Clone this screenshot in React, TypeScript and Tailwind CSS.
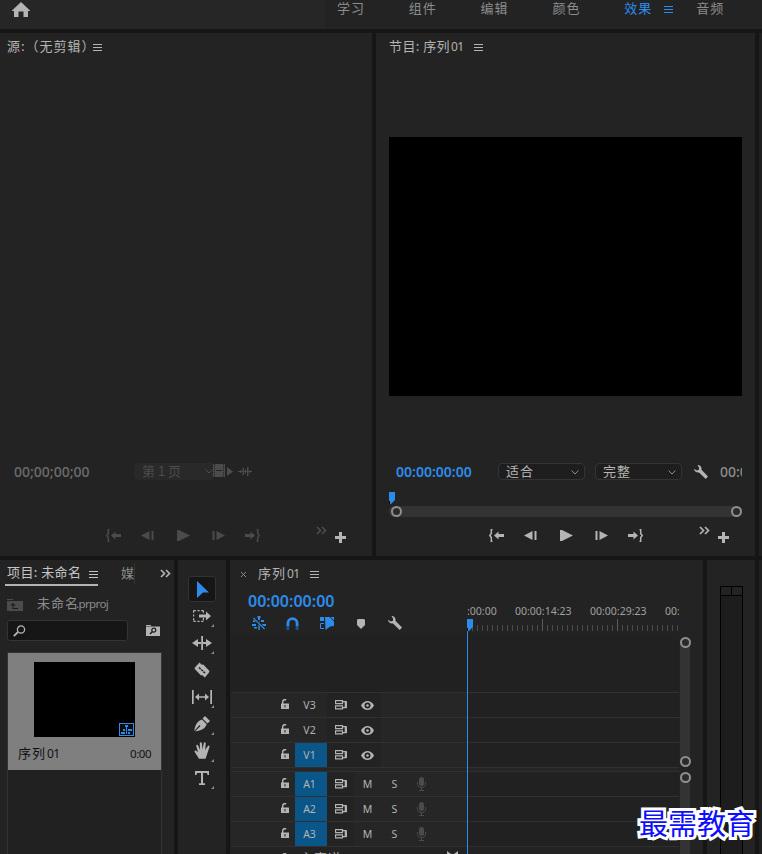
import type { ReactNode } from "react";

type IconProps = { className?: string };

type GlyphProps = IconProps & {
  w: number;
  h: number;
  children: ReactNode;
};

const Glyph = ({ w, h, className = "", children }: GlyphProps) => (
  <svg
    width={w}
    height={h}
    viewBox={`0 0 ${w} ${h}`}
    fill="currentColor"
    className={`block shrink-0 ${className}`}
  >
    {children}
  </svg>
);

const HomeIcon = ({ className }: IconProps) => (
  <Glyph w={18} h={15} className={className}>
    <path d="M9 0 18 8.4V9h-2v6h-4.500V9.500h-5V15H2V9H0v-.6z" />
  </Glyph>
);

const MenuIcon = ({ className }: IconProps) => (
  <Glyph w={9} h={7} className={className}>
    <path d="M0 0h9v1H0zM0 3h9v1H0zM0 6h9v1H0z" />
  </Glyph>
);

const ChevronIcon = ({ className }: IconProps) => (
  <Glyph w={8} h={5} className={className}>
    <path d="M.5.5 4 4 7.500.5" fill="none" stroke="currentColor" />
  </Glyph>
);

const MoreIcon = ({ className }: IconProps) => (
  <Glyph w={11} h={9} className={className}>
    <path
      d="m1 1 3.500 3.500L1 8M6 1l3.500 3.500L6 8"
      fill="none"
      stroke="currentColor"
      strokeWidth="1.700"
    />
  </Glyph>
);

const PlusIcon = ({ className }: IconProps) => (
  <Glyph w={11} h={11} className={className}>
    <path d="M4 0h3v4h4v3H7v4H4V7H0V4h4z" />
  </Glyph>
);

const GoInIcon = ({ className }: IconProps) => (
  <Glyph w={15} h={13} className={className}>
    <path d="M3.500.5H2.300v4L.8 6.500l1.500 2v4h1.200" fill="none" stroke="currentColor" strokeWidth="1.500" />
    <path d="M5 6.500 9.500 2.500V5H15v3H9.500v2.500z" />
  </Glyph>
);

const GoOutIcon = ({ className }: IconProps) => (
  <Glyph w={15} h={13} className={className}>
    <path d="M11.500.5h1.200v4l1.500 2-1.500 2v4h-1.200" fill="none" stroke="currentColor" strokeWidth="1.500" />
    <path d="M10 6.500 5.500 2.500V5H0v3h5.500v2.500z" />
  </Glyph>
);

const StepBackIcon = ({ className }: IconProps) => (
  <Glyph w={13} h={9} className={className}>
    <path d="M0 4.500 8.500 0v9zM10.500 0h2v9h-2z" />
  </Glyph>
);

const StepForwardIcon = ({ className }: IconProps) => (
  <Glyph w={13} h={9} className={className}>
    <path d="M13 4.500 4.500 0v9zM.5 0h2v9h-2z" />
  </Glyph>
);

const PlayIcon = ({ className }: IconProps) => (
  <Glyph w={13} h={11} className={className}>
    <path d="M0 0h2l11 5.500L2 11H0z" />
  </Glyph>
);

const WrenchIcon = ({ className }: IconProps) => (
  <Glyph w={14} h={14} className={className}>
    <path d="M3.500 0C6 0 8 2 7.500 4.800L14 11.500 11.700 14 5 7.500C2.800 8 0 6.500 0 3.800L2.700 5.500 5 4.800V2.500z" />
  </Glyph>
);

const PlayheadIcon = ({ className }: IconProps) => (
  <Glyph w={6} h={12} className={className}>
    <path d="M0 0h6v8l-4 4H0z" />
    <path d="M0 9h1v3H0z" fill="#000" />
  </Glyph>
);

const Knob = () => (
  <span className="block size-[11px] shrink-0 rounded-full border-2 border-[#8f8f8f] bg-[#2b2b2b]" />
);

const FilmIcon = ({ className }: IconProps) => (
  <Glyph w={12} h={13} className={className}>
    <path d="M0 0h12v13H0z" />
    <path d="M1.500 0v13M10.500 0v13" stroke="#232323" strokeDasharray="1 1" fill="none" />
    <path d="M3 6h6v1H3z" fill="#232323" />
  </Glyph>
);

const WaveIcon = ({ className }: IconProps) => (
  <Glyph w={14} h={9} className={className}>
    <path d="M0 4h14v1H0zM2 3h1v3H2zM4.500 1H6v7H4.500zM7 2.500h1v4H7zM9 0h1.500v9H9zM11.500 3h1v3h-1z" />
  </Glyph>
);

const FolderUpIcon = ({ className }: IconProps) => (
  <Glyph w={16} h={12} className={className}>
    <path d="M0 0h6v1H0zM0 2h16v10H0z" />
    <path d="M6 4 3.300 6.500H5.500V10H11V9H6.500V6.500h2.200z" fill="#1b1b1b" />
  </Glyph>
);

const SearchIcon = ({ className }: IconProps) => (
  <Glyph w={13} h={12} className={className}>
    <path d="M5 7 .8 11.200" stroke="currentColor" strokeWidth="1.800" />
    <circle cx="8" cy="4.500" r="3.600" fill="none" stroke="currentColor" strokeWidth="1.300" />
  </Glyph>
);

const FolderSearchIcon = ({ className }: IconProps) => (
  <Glyph w={14} h={11} className={className}>
    <path d="M0 0h5v1H0zM0 1.500h14V11H0z" />
    <path d="M6.300 6.700 4 9" stroke="#1b1b1b" strokeWidth="1.400" />
    <circle cx="7.800" cy="5.200" r="2" fill="none" stroke="#1b1b1b" strokeWidth="1.200" />
  </Glyph>
);

const SequenceBadge = ({ className }: IconProps) => (
  <Glyph w={15} h={13} className={className}>
    <path d="M0 0h15v13H0z" />
    <path d="M1 1h13v11H1z" fill="#0d0d0d" />
    <path d="M6 2h3v2H8v7H7V4H6zM4 6h2v2H4zM9 6h4v2H9zM2 9h4v2H2zM9 9h2v2H9z" />
  </Glyph>
);

/* tools */

const SelectIcon = () => (
  <Glyph w={12} h={17} className="ml-px text-[#2d8ceb]">
    <path d="M0 0 12 11.500 6 11.500 0 17z" />
  </Glyph>
);

const TrackSelectIcon = () => (
  <Glyph w={18} h={12}>
    <path
      d="M.6.600h9.800M.6 11.400h9.800M.6.600v10.800M10.400.600v3M10.400 8v3.400"
      fill="none"
      stroke="currentColor"
      strokeWidth="1.200"
      strokeDasharray="2.200 1.600"
    />
    <path d="M6 4.500h7v-3L18 6l-5 4.500V7.500H6z" />
  </Glyph>
);

const RippleIcon = () => (
  <Glyph w={20} h={14}>
    <path d="M9.200 0h1.800v14H9.200zM0 7l6-4v3h3v2H6v3zM20 7l-6-4v3h-3v2h3v3z" />
  </Glyph>
);

const RazorIcon = () => (
  <Glyph w={16} h={16}>
    <path d="M5.500.5 8 3l1-.8L15.500 9 14.700 11 10.800 15.500 8 13l-1 .5L.5 6.800 1.300 5z" />
    <path d="m5 5.500 6 5.500" stroke="#232323" strokeWidth="1.600" strokeDasharray="2.200 .8" />
  </Glyph>
);

const SlipIcon = () => (
  <Glyph w={20} h={14}>
    <path d="M0 0h1.700v14H0zM18.300 0H20v14h-1.700z" />
    <path d="M3 7l4-3.500v2.800h6V3.500L17 7l-4 3.500V7.700H7v2.800z" />
  </Glyph>
);

const PenIcon = () => (
  <Glyph w={16} h={16}>
    <path d="M11 0 16 5l-2.500 2.500L8.600 2.500z" />
    <path d="M8 3.500l4.700 4.700C11.500 12 8 14.500 1 15.500L6.500 10 5.500 9 .3 15C1 9 3.500 5 8 3.500z" />
  </Glyph>
);

const HandIcon = () => (
  <Glyph w={16} h={17}>
    <path d="M5 16.800 1 10.500C-.2 9 1 8 2.200 8.800L4 10.300 2.300 4.300C2 2.700 3.700 2.300 4.200 3.800L6 7.800 5.800 1.500c0-1.700 1.900-1.700 2.100 0L8.600 7.500 9.700 1.300c.3-1.600 2.100-1.200 2 .4L11.200 8 13.700 4.200c.8-1.400 2.400-.5 1.700 1L13 12.500 11.500 16.800z" />
  </Glyph>
);

const TypeIcon = () => (
  <Glyph w={14} h={14}>
    <path d="M0 0h14v4h-1.500L12 2H8v10.300h2V14H4v-1.700h2V2H2l-.5 2H0z" />
  </Glyph>
);

/* timeline */

const NestIcon = ({ className }: IconProps) => (
  <Glyph w={14} h={14} className={className}>
    <path d="M5.500 0h3v2H8v2H6V2h-.5zM1 4h4v2H1zM9 4h3v2H9zM0 8h4v2H0zM10 8h4v2h-4zM6.300 5h1.500v9H6.300zM2 11h3v1.500H2z" />
    <path d="m2 2 10.500 11" stroke="#232323" strokeWidth="2.600" />
    <path d="m1.500 2 11 11" stroke="currentColor" strokeWidth="1.200" />
  </Glyph>
);

const MagnetIcon = ({ className }: IconProps) => (
  <Glyph w={13} h={13} className={className}>
    <path d="M1.900 9.500V6.200a4.600 4.600 0 0 1 9.200 0v3.300" fill="none" stroke="currentColor" strokeWidth="2.800" />
    <path d="M.5 9.500h2.800V13H.5zM9.700 9.500h2.800V13H9.700z" fill="#17568f" />
  </Glyph>
);

const LinkedIcon = ({ className }: IconProps) => (
  <Glyph w={14} h={13} className={className}>
    <path d="M0 0h4v4H0zM5 0h4.500l4.500 4.500V9l-4 .5L5.500 13zM10.500 0H14v3.500z" />
    <path d="M4 6.500H.5v5H4" fill="none" stroke="currentColor" />
  </Glyph>
);

const MarkerIcon = ({ className }: IconProps) => (
  <Glyph w={8} h={10} className={className}>
    <path d="M1 0h6l1 1v5L4 10 0 6V1z" />
  </Glyph>
);

const LockIcon = ({ className }: IconProps) => (
  <Glyph w={8} h={11} className={className}>
    <path d="M0 4.500h8V10H0z" />
    <path d="M1.700 5V2.800C1.700.7 3 .6 5.300.6" fill="none" stroke="currentColor" strokeWidth="1.400" />
    <path d="M3.500 6h1v2.500h-1z" fill="#232323" />
  </Glyph>
);

const SyncIcon = ({ className }: IconProps) => (
  <Glyph w={12} h={10} className={className}>
    <path d="M.5.700h7v3h-7zM.5 5.800h7v3h-7zM7.500 1.700h3.500v6H7.500" fill="none" stroke="currentColor" strokeWidth="1.200" />
    <path d="M9.700 1.500H12v6.500H9.700z" />
  </Glyph>
);

const EyeIcon = ({ className }: IconProps) => (
  <Glyph w={13} h={9} className={className}>
    <path d="M0 4.500C3-1.500 10-1.500 13 4.500 10 10.500 3 10.500 0 4.500z" />
    <circle cx="6.500" cy="4.500" r="3" fill="#232323" />
    <circle cx="6.500" cy="4.500" r="1.300" />
  </Glyph>
);

const MicIcon = ({ className }: IconProps) => (
  <Glyph w={9} h={14} className={className}>
    <rect x="2" y="0" width="5" height="9" rx="2.500" />
    <path d="M.5 5v2.500C.5 11.500 8.500 11.500 8.500 7.500V5M4.500 10.500V13M2 13.500h5" fill="none" stroke="currentColor" />
  </Glyph>
);

const workspaces = ["学习", "组件", "编辑", "颜色", "效果", "音频"];

const TopBar = () => (
  <header className="flex h-[29px] shrink-0 bg-[#232323] text-[13px] leading-[15px] tracking-[1px] text-[#8c8c8c]">
    <div className="w-[325px] shrink-0 bg-[#262626] pl-3 pt-[2px]">
      <HomeIcon className="text-[#b4b4b4]" />
    </div>
    <nav className="flex pl-3">
      {workspaces.map((name) => (
        <div
          key={name}
          className={
            name === "效果"
              ? "flex w-[72px] shrink-0 text-[#2d8ceb]"
              : "w-[71.800px] shrink-0"
          }
        >
          {name}
          {name === "效果" && <MenuIcon className="ml-3 mt-[6px]" />}
        </div>
      ))}
    </nav>
  </header>
);

const Transport = () => (
  <div className="flex items-center">
    <GoInIcon />
    <StepBackIcon className="ml-5" />
    <PlayIcon className="ml-[23px]" />
    <StepForwardIcon className="ml-[22px]" />
    <GoOutIcon className="ml-5" />
  </div>
);

const SourcePanel = () => (
  <section className="flex w-[372px] flex-col bg-[#232323]">
    <div className="flex h-7 items-center pl-[7px] text-[13px] tracking-[1px] text-[#b4b4b4]">
      <span className="-mt-[2px] w-[86px] whitespace-nowrap">源:（无剪辑）</span>
      <MenuIcon className="mt-px" />
    </div>
    <div className="mt-[402px] flex h-[17px] items-center pl-[14px] text-[#4b4b4b]">
      <span className="w-[120px] font-[Noto_Sans] text-[14px] font-medium text-[#6c6c6c]">
        00;00;00;00
      </span>
      <div className="flex h-[17px] w-[79px] items-center rounded-l-sm bg-[#292929] pl-2 text-[13px]">
        <span className="-mt-[2px] w-[66px] whitespace-nowrap">第 1 页</span>
        <ChevronIcon />
      </div>
      <FilmIcon className="-mt-[2px]" />
      <Glyph w={6} h={9} className="ml-[2px]">
        <path d="M0 0 6 4.500 0 9z" />
      </Glyph>
      <WaveIcon className="ml-[5px]" />
    </div>
    <div className="mt-[49px] flex h-[13px] items-center pl-[106px] text-[#4b4b4b]">
      <Transport />
      <MoreIcon className="-mt-[11px] ml-14" />
      <PlusIcon className="ml-2 mt-1 text-[#b4b4b4]" />
    </div>
  </section>
);

const Select = ({ label }: { label: string }) => (
  <div className="flex h-[17px] w-[87px] shrink-0 items-center justify-between rounded-sm border border-[#343434] bg-[#1e1e1e] pl-[7px] pr-[5px] text-[13px] leading-[15px] tracking-[1px] text-[#b4b4b4]">
    <span className="-mt-[2px]">{label}</span>
    <ChevronIcon className="mt-px text-[#8c8c8c]" />
  </div>
);

const ProgramPanel = () => (
  <section className="flex w-[379px] flex-col bg-[#232323] px-[13px] text-[#b4b4b4]">
    <div className="flex h-7 items-center text-[13px] tracking-[1px]">
      <span className="-mt-[2px] w-[62px] whitespace-nowrap tracking-[0.400px]">节目: 序列</span>
      <span className="w-[23px] font-[Noto_Sans] text-[12px] tracking-[-0.700px]">01</span>
      <MenuIcon className="mt-px" />
    </div>
    <div className="mt-[76px] h-[259px] w-[353px] bg-black" />
    <div className="mt-[67px] flex h-[17px] w-[353px] items-center overflow-hidden pl-[7px]">
      <span className="w-[102px] shrink-0 font-[Noto_Sans] text-[14px] font-semibold leading-[17px] text-[#2d8ceb]">
        00:00:00:00
      </span>
      <Select label="适合" />
      <div className="w-[10px] shrink-0" />
      <Select label="完整" />
      <WrenchIcon className="ml-3" />
      <span className="ml-3 font-[Noto_Sans] text-[14px] font-medium leading-[17px] text-[#8c8c8c]">
        00:0
      </span>
    </div>
    <PlayheadIcon className="mt-3 text-[#2d8ceb]" />
    <div className="mt-[2px] flex h-[11px] w-[353px] items-center justify-between rounded-full bg-[#333333] pl-[2px]">
      <Knob />
      <Knob />
    </div>
    <div className="mt-3 flex h-[13px] items-center pl-[100px]">
      <Transport />
      <MoreIcon className="-mt-[11px] ml-14" />
      <PlusIcon className="ml-2 mt-1" />
    </div>
  </section>
);

const ProjectPanel = () => (
  <section className="flex w-[174px] flex-col bg-[#232323] text-[13px] tracking-[1px]">
    <div className="flex h-[26px] pl-[5px]">
      <div className="flex w-[93px] items-center border-b-2 border-[#b4b4b4] pl-[2px] text-[#c4c4c4]">
        <span className="w-[82px] whitespace-nowrap tracking-[0.400px]">项目: 未命名</span>
        <MenuIcon className="mt-1" />
      </div>
      <div className="ml-[23px] mt-[3px] h-[21px] w-[14px] overflow-hidden border-r border-[#343434] text-[#8c8c8c]">
        媒
      </div>
      <MoreIcon className="ml-[25px] mt-[9px] text-[#b4b4b4]" />
    </div>
    <div className="mt-2 flex h-5 items-center pl-[7px] text-[#8c8c8c]">
      <FolderUpIcon className="mt-[2px] text-[#4b4b4b]" />
      <span className="-mt-[2px] ml-[14px]">未命名</span>
      <span className="-ml-[3px] font-[Noto_Sans] text-[11.500px] tracking-[-0.600px]">.prproj</span>
    </div>
    <div className="mt-[6px] flex h-[21px] items-center pl-[7px] text-[#b4b4b4]">
      <div className="flex h-[21px] w-[121px] items-center rounded-[3px] border border-[#343434] bg-[#161616] pl-[5px]">
        <SearchIcon />
      </div>
      <FolderSearchIcon className="-mt-px ml-[18px]" />
    </div>
    <div className="ml-[7px] mt-[11px] w-[155px] flex-1 border border-b-0 border-[#343434] bg-[#212121]">
      <div className="h-[117px] bg-[#7f7f7f] pt-[9px] text-[#111111]">
        <div className="ml-[26px] flex h-[75px] w-[101px] items-end justify-end bg-black pb-px pr-px text-[#2d8ceb]">
          <SequenceBadge />
        </div>
        <div className="flex h-[33px] items-center pl-[10px]">
          <span className="-mt-[2px] w-[29px]">序列</span>
          <span className="w-[83px] font-[Noto_Sans] text-[12px] tracking-[-0.700px]">01</span>
          <span className="font-[Noto_Sans] text-[11.500px] tracking-[-0.400px]">0:00</span>
        </div>
      </div>
    </div>
  </section>
);

const tools = [
  { name: "select", icon: <SelectIcon />, sub: false },
  { name: "track", icon: <TrackSelectIcon />, sub: true },
  { name: "ripple", icon: <RippleIcon />, sub: true },
  { name: "razor", icon: <RazorIcon />, sub: false },
  { name: "slip", icon: <SlipIcon />, sub: true },
  { name: "pen", icon: <PenIcon />, sub: true },
  { name: "hand", icon: <HandIcon />, sub: true },
  { name: "type", icon: <TypeIcon />, sub: true },
];

const ToolsPanel = () => (
  <section className="flex w-12 flex-col items-center bg-[#232323] pt-4 text-[#b4b4b4]">
    {tools.map(({ name, icon, sub }) => (
      <div
        key={name}
        className={
          name === "select"
            ? "relative flex h-[26px] w-7 items-center justify-center rounded-[3px] border border-[#333333] bg-[#161616]"
            : "relative flex h-[27px] w-7 items-center justify-center"
        }
      >
        {icon}
        {sub && (
          <Glyph w={3} h={3} className="absolute bottom-[2px] right-[2px] text-[#8c8c8c]">
            <path d="M3 0v3H0z" />
          </Glyph>
        )}
      </div>
    ))}
  </section>
);

const Ruler = () => (
  <div className="h-full w-[212px] overflow-hidden pt-[43px]">
    <div className="flex h-4 items-center whitespace-nowrap pt-px font-[Noto_Sans] text-[10.500px] text-[#a0a0a0]">
      <span className="w-12 shrink-0">:00:00</span>
      <span className="w-[75px] shrink-0">00:00:14:23</span>
      <span className="w-[75px] shrink-0">00:00:29:23</span>
      <span>00:</span>
    </div>
    <div className="flex h-3 items-end">
      <PlayheadIcon className="z-10 -mr-[6px] text-[#2d8ceb]" />
      {Array.from({ length: 43 }, (_, i) => (
        <span
          key={i}
          className={
            i > 0 && i % 15 === 0
              ? "mr-1 h-3 w-px shrink-0 bg-[#5a5a5a]"
              : "mr-1 h-[6px] w-px shrink-0 bg-[#4b4b4b]"
          }
        />
      ))}
    </div>
  </div>
);

const VideoTrack = ({ name }: { name: string }) => (
  <div className="flex h-[25px] shrink-0 border-t border-[#303030]">
    <div className="flex w-[236px] items-center bg-[#262626] pl-[50px] text-[#b4b4b4]">
      <LockIcon className="-mt-px" />
      <span
        className={
          name === "V1"
            ? "ml-[6px] flex h-6 w-8 items-center justify-center bg-[#0a5688] pr-[3px] pt-px font-[Noto_Sans] text-[10.500px]"
            : "ml-[6px] flex h-6 w-8 items-center justify-center pr-[3px] pt-px font-[Noto_Sans] text-[10.500px]"
        }
      >
        {name}
      </span>
      <div className="flex h-6 w-[54px] items-center bg-[#232323] pl-2">
        <SyncIcon className="-mt-px" />
        <EyeIcon className="ml-[14px] mt-px" />
      </div>
    </div>
    <div className="w-[212px] bg-[#212121]" />
  </div>
);

const AudioTrack = ({ name }: { name: string }) => (
  <div className="flex h-[25px] shrink-0 border-t border-[#303030]">
    <div className="flex w-[236px] items-center bg-[#262626] pl-[50px] font-[Noto_Sans] text-[10.500px] text-[#b4b4b4]">
      <LockIcon className="-mt-px" />
      <span className="ml-[6px] flex h-6 w-8 items-center justify-center bg-[#0a5688] pr-[3px] pt-px">
        {name}
      </span>
      <div className="flex h-6 w-[27px] items-center bg-[#232323] pl-2">
        <SyncIcon className="-mt-px" />
      </div>
      <span className="w-[27px] pt-px text-center">M</span>
      <span className="w-[27px] pt-px text-center">S</span>
      <MicIcon className="ml-[9px] text-[#4b4b4b]" />
    </div>
    <div className="w-[212px] bg-[#212121]" />
  </div>
);

const TimelinePanel = () => (
  <section className="relative flex w-[473px] flex-col overflow-hidden bg-[#232323] text-[#b4b4b4]">
    <div className="flex h-[73px]">
      <div className="w-[237px] shrink-0">
        <div className="flex h-7 items-center pl-[11px] text-[13px] tracking-[1px]">
          <Glyph w={5} h={5} className="mt-px text-[#8c8c8c]">
            <path d="m0 0 5 5M5 0 0 5" stroke="currentColor" />
          </Glyph>
          <span className="-mt-[2px] ml-[12px] w-[29px]">序列</span>
          <span className="w-[23px] font-[Noto_Sans] text-[12px] tracking-[-0.700px]">01</span>
          <MenuIcon className="mt-px" />
        </div>
        <div className="flex h-[27px] items-center pb-[2px] pl-[18px] font-[Noto_Sans] text-[16px] font-semibold text-[#2d8ceb]">
          00:00:00:00
        </div>
        <div className="flex h-[16px] items-center pl-[22px] text-[#2d8ceb]">
          <NestIcon />
          <MagnetIcon className="ml-5" />
          <LinkedIcon className="ml-[21px]" />
          <MarkerIcon className="ml-[23px] mt-px text-[#b4b4b4]" />
          <WrenchIcon className="ml-[23px] text-[#b4b4b4]" />
        </div>
      </div>
      <Ruler />
    </div>
    <div className="flex flex-1">
      <div className="flex w-[449px] flex-col bg-[#212121] pl-px">
        <div className="h-[59px] shrink-0" />
        <VideoTrack name="V3" />
        <VideoTrack name="V2" />
        <VideoTrack name="V1" />
        <div className="h-1 shrink-0 border-t border-[#303030] bg-[#262626]" />
        <AudioTrack name="A1" />
        <AudioTrack name="A2" />
        <AudioTrack name="A3" />
        <div className="flex h-2 items-start overflow-hidden border-t border-[#303030] bg-[#232323] pl-[50px] text-[13px] leading-[17px] tracking-[1px]">
          <LockIcon className="mt-[6px]" />
          <span className="ml-[11px] mt-[2px] w-[147px]">主声道</span>
          <Glyph w={11} h={9} className="mt-1">
            <path d="M0 0 5.500 4 11 0v9L5.500 5 0 9z" />
          </Glyph>
        </div>
      </div>
      <div className="ml-px flex w-[10px] flex-col">
        <div className="mt-[4px] flex h-[130px] flex-col justify-between rounded-full bg-[#333333]">
          <Knob />
          <Knob />
        </div>
        <div className="mt-[5px] flex-1 rounded-t-full bg-[#333333]">
          <Knob />
        </div>
      </div>
    </div>
    <div className="absolute bottom-0 left-[237px] top-[71px] w-px bg-[#2d8ceb]" />
  </section>
);

const MetersPanel = () => (
  <section className="flex w-12 flex-col bg-[#232323] pl-[13px] pt-[26px]">
    <div className="flex w-[23px] flex-1 flex-col border border-b-0 border-black bg-[#1d1d1d]">
      <div className="flex h-[9px] border-b border-black bg-[#232323]">
        <div className="w-[11px] border-r border-black" />
      </div>
    </div>
  </section>
);

export default function App() {
  return (
    <main className="relative flex h-[854px] w-[762px] flex-col gap-1 overflow-hidden bg-[#161616] font-['Noto_Sans_CJK_SC',sans-serif] font-normal">
      <TopBar />
      <div className="flex h-[523px] shrink-0 gap-1">
        <SourcePanel />
        <ProgramPanel />
        <div className="flex-1 bg-[#1f1f1f]" />
      </div>
      <div className="flex min-h-0 flex-1 gap-1">
        <ProjectPanel />
        <ToolsPanel />
        <TimelinePanel />
        <MetersPanel />
        <div className="flex-1 bg-[#1f1f1f]" />
      </div>
      <div className="absolute left-[639px] top-[801px] whitespace-nowrap text-[29px] font-normal leading-[42px] text-[#0d0dff] [-webkit-text-stroke:6px_white] [paint-order:stroke_fill]">
        最需教育
      </div>
    </main>
  );
}
